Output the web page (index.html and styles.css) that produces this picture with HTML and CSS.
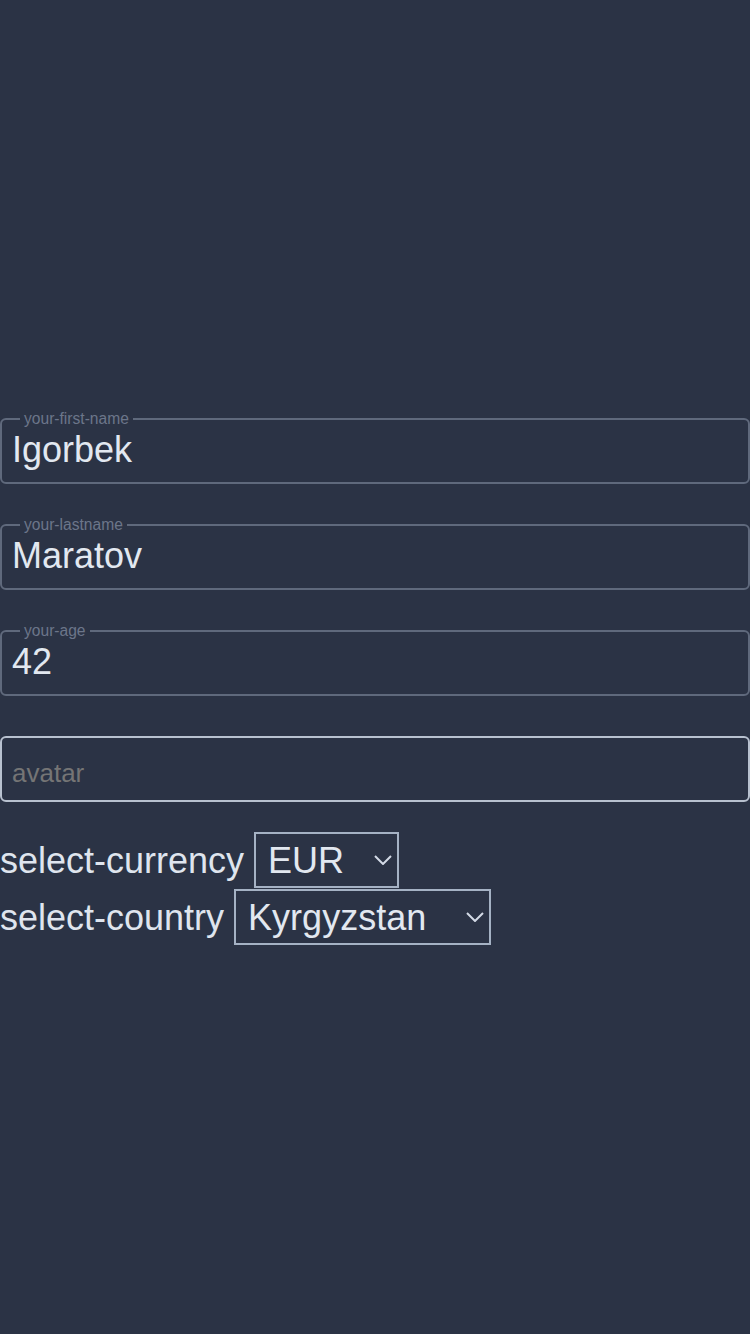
FILE: index.html
```html
<!DOCTYPE html>
<html lang="en">
<head>
<meta charset="utf-8">
<title>Form</title>
<link rel="stylesheet" href="styles.css">
</head>
<body>
<main class="page">
  <form class="form">
    <fieldset class="field">
      <legend class="field-legend">your-first-name</legend>
      <input class="field-input" type="text" value="Igorbek">
    </fieldset>
    <fieldset class="field">
      <legend class="field-legend">your-lastname</legend>
      <input class="field-input" type="text" value="Maratov">
    </fieldset>
    <fieldset class="field">
      <legend class="field-legend">your-age</legend>
      <input class="field-input" type="text" value="42">
    </fieldset>
    <input class="avatar-input" type="text" placeholder="avatar">
    <div class="select-rows">
      <div class="select-row">
        <label class="select-label" for="currency">select-currency</label>
        <span class="select-wrap">
          <select id="currency" class="select select-currency">
            <option>EUR</option>
            <option>USD</option>
          </select>
          <svg class="chevron" width="18" height="10" viewBox="0 0 18 10" aria-hidden="true"><polyline points="1,1 9,9 17,1" fill="none" stroke="#d3dae6" stroke-width="2"/></svg>
        </span>
      </div>
      <div class="select-row">
        <label class="select-label" for="country">select-country</label>
        <span class="select-wrap">
          <select id="country" class="select select-country">
            <option>Kyrgyzstan</option>
            <option>Kazakhstan</option>
          </select>
          <svg class="chevron" width="18" height="10" viewBox="0 0 18 10" aria-hidden="true"><polyline points="1,1 9,9 17,1" fill="none" stroke="#d3dae6" stroke-width="2"/></svg>
        </span>
      </div>
    </div>
  </form>
</main>
</body>
</html>
```

FILE: styles.css
```css
html, body {
  margin: 0;
  padding: 0;
  background: #2b3345;
}

body {
  font-family: "Liberation Sans", Arial, sans-serif;
  color: #e2e8f0;
  min-height: 1334px;
}

.page {
  padding-top: 410px;
}

.form {
  display: block;
  margin: 0;
}

.field {
  margin: 0 0 32px 0;
  padding: 0 10px 12px 10px;
  border: 2px solid #5f697c;
  border-radius: 6px;
  min-inline-size: 0;
}

.field-legend {
  margin-left: 8px;
  padding: 0 4px;
  font-size: 15.6px;
  line-height: 18px;
  color: #6c768a;
}

.field-input {
  display: block;
  width: 100%;
  box-sizing: border-box;
  margin: 0;
  padding: 1px 0 0 0;
  border: none;
  outline: none;
  background: transparent;
  font-family: "Liberation Sans", Arial, sans-serif;
  font-size: 36px;
  line-height: 41px;
  height: 42px;
  color: #e2e8f0;
}

.avatar-input {
  display: block;
  width: 100%;
  box-sizing: border-box;
  margin: 40px 0 0 0;
  height: 66px;
  padding: 8px 10px 0 10px;
  border: 2px solid #b8c1cf;
  border-radius: 6px;
  background: transparent;
  outline: none;
  font-family: "Liberation Sans", Arial, sans-serif;
  font-size: 26px;
  color: #e2e8f0;
}

.avatar-input::placeholder {
  color: #757575;
}

.select-rows {
  margin-top: 30px;
}

.select-row {
  font-size: 36px;
  color: #dfe5ee;
  height: 57px;
}

.select-label {
  color: #dfe5ee;
}

.select-wrap {
  position: relative;
  display: inline-block;
}

.select {
  appearance: none;
  -webkit-appearance: none;
  box-sizing: border-box;
  margin: 0;
  padding: 6px 40px 5px 12px;
  border: 2px solid #a5b2c4;
  border-radius: 0;
  background: transparent;
  font-family: "Liberation Sans", Arial, sans-serif;
  font-size: 36px;
  line-height: 41px;
  height: 56px;
  color: #e2e8f0;
  outline: none;
}

.select-currency {
  width: 145px;
}

.select-country {
  width: 257px;
}

.chevron {
  position: absolute;
  right: 7px;
  top: 50%;
  transform: translateY(-50%);
  pointer-events: none;
}
```
